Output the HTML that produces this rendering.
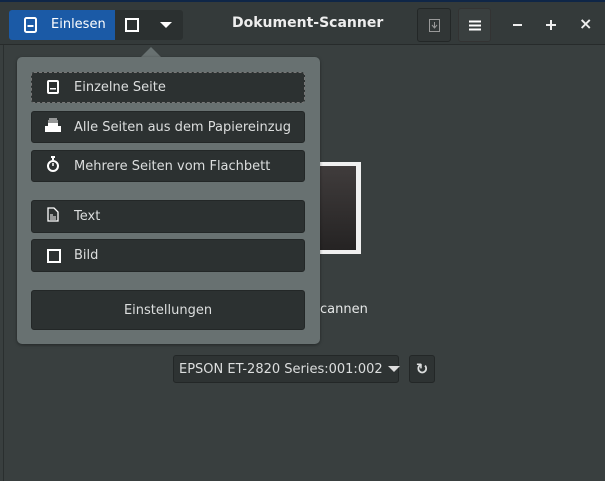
<!DOCTYPE html><html><head><style>
body{margin:0;width:605px;height:481px;background:#393f3f;font-family:"DejaVu Sans","Liberation Sans",sans-serif;overflow:hidden;position:relative;color:#e6e8e8}
.a{position:absolute}
.hdr{left:0;top:0;width:605px;height:45px;background:#343a3a;border-top:2px solid #0f2647;box-sizing:border-box;border-bottom:1px solid #272b2b}
.btn{position:absolute;background:#2c3131;border-radius:3px;border:1px solid #232727;box-sizing:border-box;font-size:13px;color:#dcdede;display:flex;align-items:center;white-space:nowrap}
.pop{left:17px;top:57px;width:303px;height:287px;background:#687171;border-radius:5px;box-shadow:0 1px 3px rgba(0,0,0,.4)}
.pb{left:31px;width:274px;padding-left:42px}
</style></head><body>
<div class="a" style="left:3px;top:45px;width:1px;height:436px;background:#2a2f2f"></div>
<div class="a hdr"></div>
<div class="a" style="left:9px;top:10px;width:106px;height:30px;background:#1b5aa6;border-radius:3px 0 0 3px;color:#fff;font-size:13px;line-height:30px">
<svg class="a" style="left:15px;top:7px" width="13" height="16"><rect x="1" y="1" width="11" height="14" rx="1.5" fill="none" stroke="#fff" stroke-width="2"/><rect x="3.5" y="8" width="6" height="2" fill="#fff"/></svg>
<span class="a" style="left:42px">Einlesen</span></div>
<div class="a" style="left:115px;top:10px;width:68px;height:30px;background:#2b3030;border-radius:0 3px 3px 0"></div>
<div class="a" style="left:125px;top:18px;width:10px;height:10px;border:2px solid #fff"></div>
<div class="a" style="left:160px;top:22px;width:0;height:0;border-left:6px solid transparent;border-right:6px solid transparent;border-top:6px solid #fff"></div>
<div class="a" style="left:232px;top:15px;font-weight:bold;font-size:14px;color:#eee">Dokument-Scanner</div>
<div class="btn" style="left:417px;top:8px;width:34px;height:34px;background:#313636"><svg style="margin-left:11px" width="11" height="13"><rect x=".5" y=".5" width="10" height="12" fill="none" stroke="#999"/><path d="M5.5 3v5M3 6l2.5 3 2.5-3" stroke="#999" fill="none"/></svg></div>
<div class="btn" style="left:458px;top:8px;width:33px;height:34px;background:#393f3f;border-color:#333"><svg style="margin-left:10px" width="12" height="11"><path d="M0 1.5h12M0 5.5h12M0 9.5h12" stroke="#fff" stroke-width="2"/></svg></div>
<div class="a" style="left:513px;top:24px;width:9px;height:2px;background:#eee"></div>
<div class="a" style="left:546px;top:24px;width:10px;height:2px;background:#eee"></div><div class="a" style="left:550px;top:20px;width:2px;height:10px;background:#eee"></div>
<div class="a" style="left:579px;top:14px;font-size:16px;font-weight:bold;color:#eee">×</div>
<div class="a" style="left:320px;top:162px;width:41px;height:92px;background:#f0f0f0"></div>
<div class="a" style="left:320px;top:166px;width:36px;height:84px;background:linear-gradient(#403c3c,#252323)"></div>
<div class="a" style="left:320px;top:302px;font-size:13px">cannen</div>
<div class="btn" style="left:173px;top:355px;width:226px;height:28px;background:#2e3333;padding-left:5px">EPSON ET-2820 Series:001:002<span style="margin-left:5px;border-left:6px solid transparent;border-right:6px solid transparent;border-top:6px solid #ddd;width:0;height:0"></span></div>
<div class="btn" style="left:409px;top:355px;width:26px;height:28px;background:#2e3333;justify-content:center;font-size:15px;font-weight:bold">↻</div>
<div class="a" style="left:141px;top:47px;width:0;height:0;border-left:10px solid transparent;border-right:10px solid transparent;border-bottom:10px solid #687171"></div>
<div class="a pop"></div>
<div class="btn pb" style="top:72px;height:31px;border:1px dashed #777">Einzelne Seite</div>
<svg class="a" style="left:47px;top:80px" width="12" height="14"><rect x="1" y="1" width="10" height="12" rx="1" fill="none" stroke="#fff" stroke-width="2"/><rect x="3" y="8" width="6" height="1.5" fill="#fff"/></svg>
<div class="btn pb" style="top:111px;height:32px">Alle Seiten aus dem Papiereinzug</div>
<svg class="a" style="left:45px;top:118px" width="16" height="15"><path d="M4 1h8M3 3h10" stroke="#fff"/><rect x="3" y="4.5" width="10" height="5" fill="#fff"/><rect x="0" y="8" width="16" height="6" fill="#fff"/></svg>
<div class="btn pb" style="top:150px;height:32px">Mehrere Seiten vom Flachbett</div>
<svg class="a" style="left:46px;top:156px" width="14" height="16"><path d="M5 1h4M7 1v3" stroke="#fff" stroke-width="2"/><circle cx="7" cy="10" r="5" fill="none" stroke="#fff" stroke-width="2"/><path d="M7 10V7" stroke="#fff" stroke-width="1.5"/></svg>
<div class="btn pb" style="top:200px;height:33px">Text</div>
<svg class="a" style="left:47px;top:207px" width="12" height="15"><path d="M1 1h6l4 4v9H1z" fill="none" stroke="#fff" stroke-width="1.3"/><path d="M3 8h3M3 10h6M3 12h6" stroke="#fff"/></svg>
<div class="btn pb" style="top:239px;height:33px">Bild</div>
<div class="a" style="left:47px;top:249px;width:10px;height:10px;border:2px solid #fff"></div>
<div class="btn" style="left:31px;top:290px;width:274px;height:40px;justify-content:center">Einstellungen</div>
</body></html>
